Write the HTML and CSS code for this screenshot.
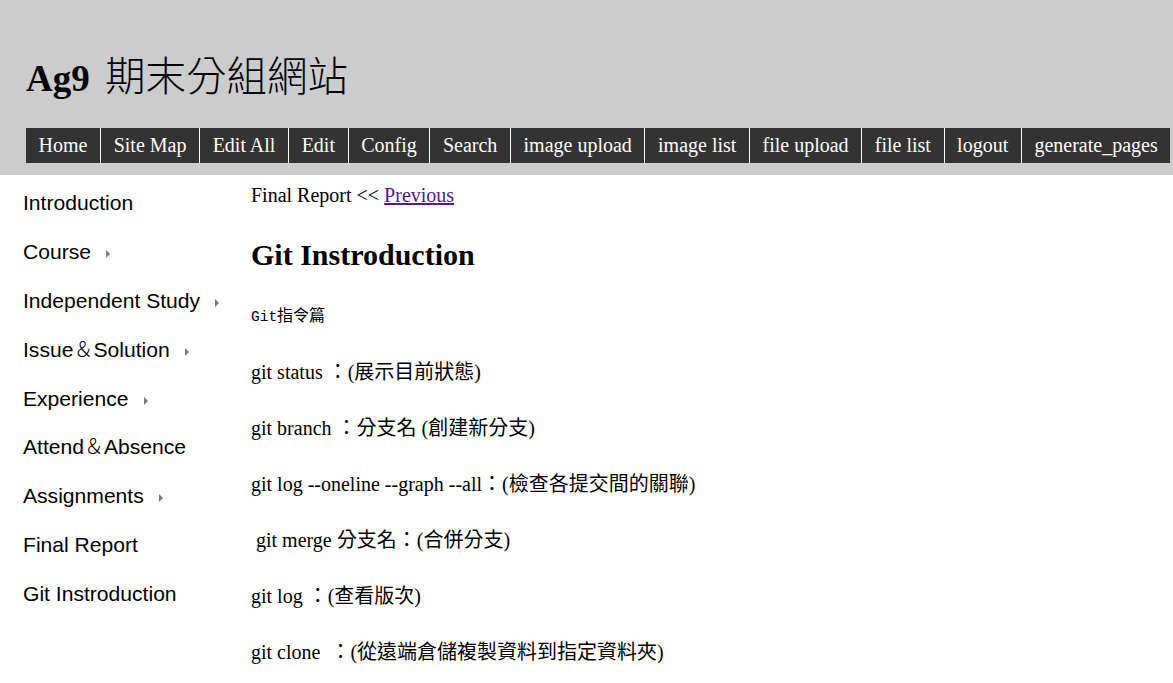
FILE: index.html
```html
<!DOCTYPE html>
<html lang="zh-Hant">
<head>
<meta charset="utf-8">
<title>Ag9 期末分組網站</title>
<link rel="stylesheet" href="styles.css">
</head>
<body>
<header class="site-header">
  <h1 class="site-title"><span class="title-latin">Ag9</span> <span class="title-cjk">期末分組網站</span></h1>
  <nav class="top-nav">
    <ul class="top-menu">
      <li><a href="#">Home</a></li>
      <li><a href="#">Site Map</a></li>
      <li><a href="#">Edit All</a></li>
      <li><a href="#">Edit</a></li>
      <li><a href="#">Config</a></li>
      <li><a href="#">Search</a></li>
      <li><a href="#">image upload</a></li>
      <li><a href="#">image list</a></li>
      <li><a href="#">file upload</a></li>
      <li><a href="#">file list</a></li>
      <li><a href="#">logout</a></li>
      <li><a href="#">generate_pages</a></li>
    </ul>
  </nav>
</header>
<div class="layout">
  <aside class="sidebar">
    <ul class="side-menu">
      <li><a href="#">Introduction</a></li>
      <li><a href="#">Course</a><span class="arrow"></span></li>
      <li><a href="#">Independent Study</a><span class="arrow"></span></li>
      <li><a href="#">Issue<span class="amp">＆</span>Solution</a><span class="arrow"></span></li>
      <li><a href="#">Experience</a><span class="arrow"></span></li>
      <li><a href="#">Attend<span class="amp">＆</span>Absence</a></li>
      <li><a href="#">Assignments</a><span class="arrow"></span></li>
      <li><a href="#">Final Report</a></li>
      <li><a href="#">Git Instroduction</a></li>
    </ul>
  </aside>
  <main class="content">
    <div class="breadcrumb">Final Report &lt;&lt; <a href="#" class="prev-link">Previous</a></div>
    <h1 class="page-title">Git Instroduction</h1>
    <p class="line code-line"><code class="code">Git<span class="code-cjk">指令篇</span></code></p>
    <p class="line">git status ：(展示目前狀態)</p>
    <p class="line">git branch ：分支名 (創建新分支)</p>
    <p class="line">git log --oneline --graph --all：(檢查各提交間的關聯)</p>
    <p class="line">&nbsp;git merge 分支名：(合併分支)</p>
    <p class="line">git log ：(查看版次)</p>
    <p class="line">git clone &nbsp;：(從遠端倉儲複製資料到指定資料夾)</p>
  </main>
</div>
</body>
</html>
```
FILE: styles.css
```css
html, body {
  margin: 0;
  padding: 0;
  background: #fff;
}

body {
  font-family: "Liberation Serif", "Noto Sans CJK TC", serif;
  color: #000;
  overflow: hidden;
}

.site-header {
  background: #cccccc;
  padding: 51px 0 12px 26px;
  overflow: hidden;
}

.site-title {
  margin: 0 0 26px 0;
  font-family: "Liberation Serif", "Noto Sans CJK TC", serif;
  font-size: 37px;
  line-height: 46px;
  font-weight: normal;
  white-space: nowrap;
}

.title-latin {
  font-weight: bold;
}

.title-cjk {
  font-family: "Noto Sans CJK TC", serif;
  font-size: 40.5px;
  font-weight: 300;
  margin-left: 6px;
}

.top-nav {
  white-space: nowrap;
}

.top-menu {
  list-style: none;
  margin: 0;
  padding: 0;
  display: flex;
  flex-wrap: nowrap;
}

.top-menu li {
  flex-shrink: 0;
  background: #333333;
}

.top-menu li + li {
  border-left: 1px solid #ffffff;
}

.top-menu a {
  display: block;
  padding: 0 12.6px;
  height: 35px;
  line-height: 35px;
  font-size: 20px;
  color: #ffffff;
  text-decoration: none;
}

.layout {
  display: flex;
  align-items: flex-start;
}

.sidebar {
  width: 228px;
  flex-shrink: 0;
  padding: 4px 0 0 23px;
}

.side-menu {
  list-style: none;
  margin: 0;
  padding: 0;
}

.side-menu li {
  font-family: "Liberation Sans", Arial, sans-serif;
  font-size: 21.1px;
  line-height: 24px;
  padding: 12.4px 0;
  white-space: nowrap;
}

.side-menu a {
  color: #000;
  text-decoration: none;
}

.amp {
  font-family: "Noto Sans CJK TC", serif;
  line-height: 1;
  font-size: 20px;
  font-weight: 300;
}

.arrow {
  display: inline-block;
  width: 0;
  height: 0;
  margin-left: 15px;
  border-left: 4.5px solid #7a7a7a;
  border-top: 4px solid transparent;
  border-bottom: 4px solid transparent;
  vertical-align: 1px;
}

.content {
  flex: 1;
  padding-top: 8px;
  font-size: 20px;
}

.breadcrumb {
  line-height: 24px;
  white-space: nowrap;
}

.prev-link {
  color: #551a8b;
}

.page-title {
  margin: 32px 0 17px 0;
  font-size: 30px;
  line-height: 32px;
  font-weight: bold;
}

.line {
  margin: 0;
  height: 56px;
  line-height: 56px;
  white-space: nowrap;
}

.code-line {
  line-height: 52px;
}

.code {
  font-family: "Liberation Mono", "Noto Sans CJK TC", monospace;
  font-size: 14.5px;
}

.code-cjk {
  font-family: "Noto Sans CJK TC", monospace;
  font-size: 16px;
}
```
